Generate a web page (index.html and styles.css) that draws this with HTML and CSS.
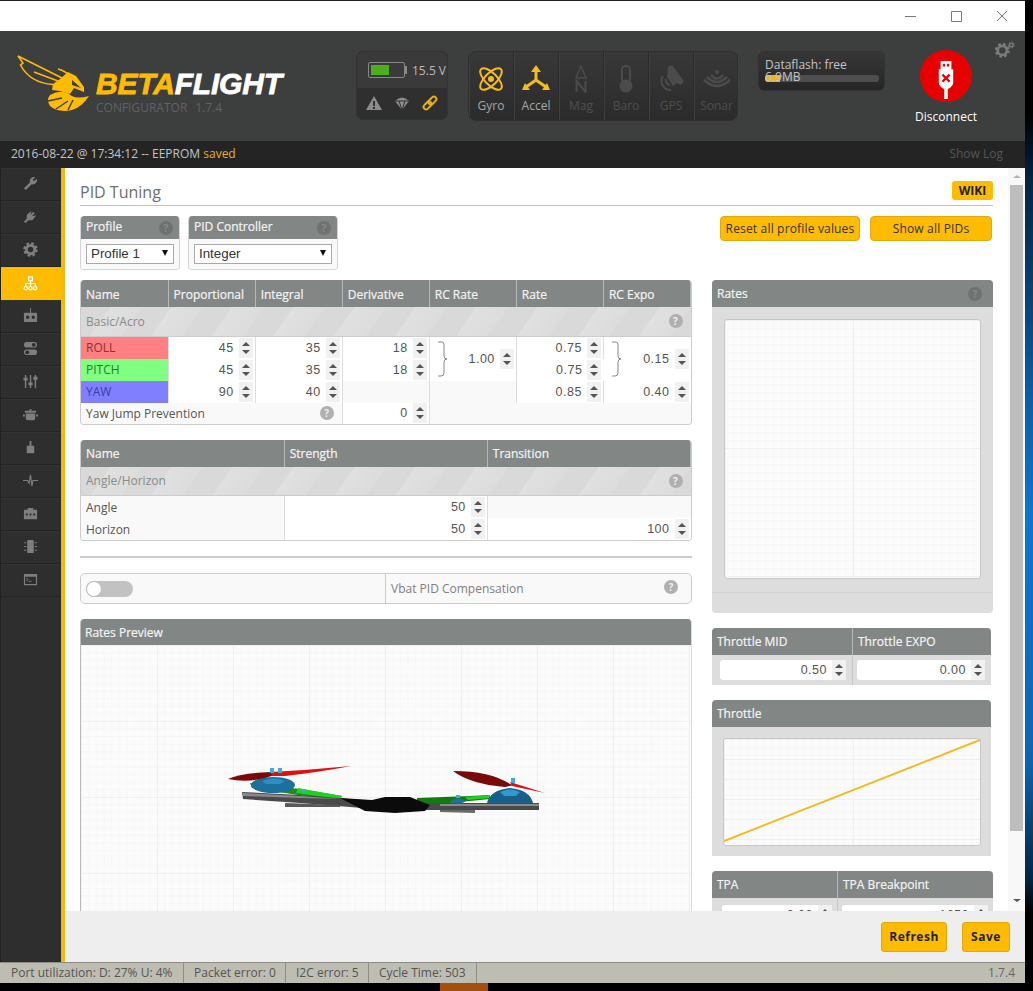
FILE: index.html
```html
<!DOCTYPE html>
<html lang="en">
<head>
    <meta charset="UTF-8">
    <title>Betaflight Configurator</title>
    <link rel="stylesheet" href="styles.css">
</head>
<body>
    <div class="screen">
        <div class="window">
            <div class="titlebar">
                <svg class="win-btn" viewBox="0 0 12 12"><path d="M1 6.500H12"/></svg>
                <svg class="win-btn" viewBox="0 0 12 12"><path d="M1.500 1.500H11.500V11.500H1.500Z"/></svg>
                <svg class="win-btn" viewBox="0 0 12 12"><path d="M1 1L11 11M11 1L1 11"/></svg>
            </div>

            <header class="header">
                <div class="logo">
                    <svg class="bee" viewBox="15 52 75 62">
                        <g fill="none" stroke="#ffbb00" stroke-width="1.6">
                            <path d="M18 56L62 78"/>
                            <path d="M18 56L23 63L20.500 65Q30 83 53 84.500"/>
                            <path d="M34 72L58 81"/>
                            <path d="M58 69Q66 71 72 78"/>
                        </g>
                        <path fill="#ffbb00" d="M60 79L68 72L76 76L84 87L84 92L74 88L70 94L60 91L52 90L53 84Z"/>
                        <path fill="#3d3e3e" d="M72 80L81 88L72 85Z"/>
                        <path fill="#ffbb00" d="M50 95Q62 88 72 96Q78 99 89 96Q82 107 72 110Q58 113 50 106Q46 100 50 95Z"/>
                        <path fill="none" stroke="#3d3e3e" stroke-width="1.5" d="M48 101L62 98M56 109L68 101M68 110L73 100"/>
                    </svg>
                    <div class="logo-text">
                        <div class="wordmark"><span class="wordmark-beta">BETA</span>FLIGHT</div>
                        <div class="logo-sub"><span>CONFIGURATOR</span><span>1.7.4</span></div>
                    </div>
                </div>

                <div class="battery-box">
                    <div class="battery-top">
                        <div class="battery"><div class="battery-fill"></div></div>
                        <span class="battery-volt">15.5 V</span>
                    </div>
                    <div class="battery-bottom">
                        <svg class="status-icon" viewBox="0 0 16 16"><path fill="#8c8c8c" d="M8 1L16 15H0Z"/><path fill="#333" d="M7 6H9V11H7ZM7 12H9V14H7Z"/></svg>
                        <svg class="status-icon" viewBox="0 0 16 16"><path fill="#8c8c8c" d="M1 6Q8 -1 15 6L8 15Z"/><path fill="none" stroke="#333" d="M1 6H15M5 6L8 15L11 6"/></svg>
                        <svg class="status-icon" viewBox="0 0 16 16"><g fill="none" stroke="#e8b010" stroke-width="2" transform="rotate(-45 8 8)"><rect x="0" y="5.500" width="9" height="5" rx="2.500"/><rect x="7" y="5.500" width="9" height="5" rx="2.500"/></g></svg>
                    </div>
                </div>

                <div class="sensors">
                    <div class="sensor on">
                        <svg class="sensor-icon" viewBox="0 0 28 28"><g fill="none" stroke="#f4bc1c" stroke-width="2"><ellipse cx="14" cy="14" rx="6" ry="14" transform="rotate(45 14 14)"/><ellipse cx="14" cy="14" rx="6" ry="14" transform="rotate(-45 14 14)"/></g><circle cx="14" cy="14" r="3" fill="#f4bc1c"/></svg>
                        <span>Gyro</span>
                    </div>
                    <div class="sensor on">
                        <svg class="sensor-icon" viewBox="0 0 28 28"><path fill="none" stroke="#f4bc1c" stroke-width="3" d="M14 6V15M14 15L4 22M14 15L24 22"/><path fill="#f4bc1c" d="M14 0L19 7H9ZM0 25L3 18L8 25ZM28 25L25 18L20 25Z"/></svg>
                        <span>Accel</span>
                    </div>
                    <div class="sensor">
                        <svg class="sensor-icon" viewBox="0 0 28 28"><path fill="none" stroke="#4b4b4b" stroke-width="1.500" d="M14 1L9 13H19Z"/><path fill="none" stroke="#4b4b4b" stroke-width="2" d="M9.500 27V16L18.500 27V16"/></svg>
                        <span>Mag</span>
                    </div>
                    <div class="sensor">
                        <svg class="sensor-icon" viewBox="0 0 28 28"><rect x="10" y="1" width="8" height="18" rx="4" fill="none" stroke="#4b4b4b" stroke-width="2"/><circle cx="14" cy="21" r="6.500" fill="#4b4b4b"/></svg>
                        <span>Baro</span>
                    </div>
                    <div class="sensor">
                        <svg class="sensor-icon" viewBox="0 0 28 28"><path fill="#4b4b4b" d="M11 2L15 0L27 16L24 20L20 18L16 21L10 12Z"/><path fill="none" stroke="#4b4b4b" stroke-width="2" d="M6 11A9 9 0 0 0 14 25M9 14A5 5 0 0 0 13 20"/></svg>
                        <span>GPS</span>
                    </div>
                    <div class="sensor">
                        <svg class="sensor-icon" viewBox="0 0 28 28"><circle cx="14" cy="7" r="2" fill="#4b4b4b"/><path fill="none" stroke="#4b4b4b" stroke-width="2.500" d="M8 10Q14 17 20 10M4 12Q14 22 24 12M1 15Q14 27 27 15"/></svg>
                        <span>Sonar</span>
                    </div>
                </div>

                <div class="dataflash">
                    <div class="dataflash-bar"><div class="dataflash-used"></div></div>
                    <div class="dataflash-text">Dataflash: free 6.9MB</div>
                </div>

                <div class="connect">
                    <div class="connect-circle">
                        <svg class="usb" viewBox="0 0 20 42"><path fill="#fff" d="M4 0H16V9H18V24Q18 28 12 31V42H8V31Q2 28 2 24V9H4Z"/><path fill="#e60000" d="M6.500 3H9V6H6.500ZM11 3H13.500V6H11Z"/><path fill="none" stroke="#e60000" stroke-width="2.500" d="M6 15L14 23M14 15L6 23"/></svg>
                    </div>
                    <div class="connect-label">Disconnect</div>
                </div>

                <svg class="settings" viewBox="0 0 22 18">
                    <circle cx="8" cy="10" r="5" fill="none" stroke="#7a7a7a" stroke-width="3"/>
                    <circle cx="8" cy="10" r="7" fill="none" stroke="#7a7a7a" stroke-width="2.500" stroke-dasharray="3 2.500"/>
                    <circle cx="18" cy="4" r="2" fill="none" stroke="#7a7a7a" stroke-width="1.500"/>
                    <circle cx="18" cy="4" r="3.300" fill="none" stroke="#7a7a7a" stroke-width="1" stroke-dasharray="1.500 1.500"/>
                </svg>
            </header>

            <div class="logbar">
                <div>2016-08-22 @ 17:34:12 -- EEPROM <span class="saved">saved</span></div>
                <div class="show-log">Show Log</div>
            </div>

            <div class="middle">
                <nav class="sidebar">
                    <a class="nav-item"><svg viewBox="0 0 16 16"><path d="M14.800 3L11.500 5.500L10.500 4L13 1.200A4.500 4.500 0 0 0 7.300 6.800L1 13L3 15L9.200 8.700A4.500 4.500 0 0 0 14.800 3Z"/></svg></a>
                    <a class="nav-item"><svg viewBox="0 0 16 16"><path d="M9 2L8 6L11 3L12.500 4.500L9.500 7.500L14 7L10 12H6L2.500 15L1 13.500L4 10V6Z"/></svg></a>
                    <a class="nav-item"><svg viewBox="0 0 16 16"><circle cx="8" cy="8" r="4.500" fill="none" stroke="#7e7e7e" stroke-width="3"/><circle cx="8" cy="8" r="6.500" fill="none" stroke="#7e7e7e" stroke-width="2.500" stroke-dasharray="2.800 2.300"/></svg></a>
                    <a class="nav-item active"><svg viewBox="0 0 16 16"><g fill="none" stroke="#fff" stroke-width="1.300"><rect x="6" y="1" width="4" height="4"/><path d="M8 5V8M3 11V8H13V11M8 8V11"/><circle cx="3" cy="13" r="1.800"/><circle cx="8" cy="13" r="1.800"/><circle cx="13" cy="13" r="1.800"/></g></svg></a>
                    <a class="nav-item"><svg viewBox="0 0 16 16"><path d="M7.500 0H8.500V5H14Q15 5 15 6V14Q15 15 14 15H2Q1 15 1 14V6Q1 5 2 5H7.500ZM5 8A1.800 1.800 0 1 0 5 11.600A1.800 1.800 0 1 0 5 8ZM11 8A1.800 1.800 0 1 0 11 11.600A1.800 1.800 0 1 0 11 8Z"/></svg></a>
                    <a class="nav-item"><svg viewBox="0 0 16 16"><path d="M4 1H12A3 3 0 0 1 12 7H4A3 3 0 0 1 4 1ZM4 9H12A3 3 0 0 1 12 15H4A3 3 0 0 1 4 9Z"/><circle cx="11.500" cy="4" r="2" fill="#2e2e2e"/><circle cx="4.500" cy="12" r="2" fill="#2e2e2e"/></svg></a>
                    <a class="nav-item"><svg viewBox="0 0 16 16"><path d="M2 1H3.500V15H2ZM7.300 1H8.800V15H7.300ZM12.500 1H14V15H12.500Z"/><path d="M0.500 4H5V7H0.500ZM5.800 9H10.300V12H5.800ZM11 3H15.500V6H11Z"/></svg></a>
                    <a class="nav-item"><svg viewBox="0 0 16 16"><path d="M7 2H9V4H14V6H2V4H7ZM3 7H13V12Q13 14 11 14H5Q3 14 3 12ZM0 8H2V10H0ZM14 8H16V10H14Z"/></svg></a>
                    <a class="nav-item"><svg viewBox="0 0 16 16"><path d="M7 1H9V6H12V14H4V6H7Z"/></svg></a>
                    <a class="nav-item"><svg viewBox="0 0 16 16"><path fill="none" stroke="#7e7e7e" stroke-width="1.200" d="M0 8H5L6.500 11L8 2L9.500 14L10.500 8H16"/></svg></a>
                    <a class="nav-item"><svg viewBox="0 0 16 16"><path d="M5 2H11V4H15V14H1V4H5Z"/><path fill="#2e2e2e" d="M3 8H5V10H3ZM7 8H9V10H7ZM11 8H13V10H11Z"/></svg></a>
                    <a class="nav-item"><svg viewBox="0 0 16 16"><rect x="4.500" y="1" width="7" height="14" rx="1"/><path fill="none" stroke="#7e7e7e" stroke-width="1.200" d="M1 4H3.500M1 8H3.500M1 12H3.500M12.500 4H15M12.500 8H15M12.500 12H15"/></svg></a>
                    <a class="nav-item"><svg viewBox="0 0 16 16"><path d="M1 2H15V14H1ZM2.200 5V12.800H13.800V5Z"/><path fill="none" stroke="#7e7e7e" d="M3.500 6.500L5.500 8L3.500 9.500M6 10H9"/></svg></a>
                </nav>

                <main class="main">
                    <div class="scroll-area">
                        <div class="tab">
                            <div class="tab-title">
                                <h1>PID Tuning</h1>
                                <a class="wiki">WIKI</a>
                            </div>

                            <div class="top-row">
                                <div class="pick pick-profile">
                                    <div class="pick-head">Profile <span class="help dark">?</span></div>
                                    <div class="pick-body"><div class="select">Profile 1</div></div>
                                </div>
                                <div class="pick pick-controller">
                                    <div class="pick-head">PID Controller <span class="help dark">?</span></div>
                                    <div class="pick-body"><div class="select">Integer</div></div>
                                </div>
                                <div class="top-actions">
                                    <a class="btn btn-reset">Reset all profile values</a>
                                    <a class="btn btn-show">Show all PIDs</a>
                                </div>
                            </div>

                            <div class="columns">
                                <div class="col-left">
                                    <div class="gui-box">
                                        <table class="pid-table">
                                            <tr class="head">
                                                <th>Name</th><th>Proportional</th><th>Integral</th><th>Derivative</th><th>RC Rate</th><th>Rate</th><th>RC Expo</th>
                                            </tr>
                                            <tr class="section">
                                                <td colspan="7"><div class="section-in">Basic/Acro <span class="help">?</span></div></td>
                                            </tr>
                                            <tr>
                                                <td class="name roll">ROLL</td>
                                                <td><div class="num">45<i class="spin"></i></div></td>
                                                <td><div class="num">35<i class="spin"></i></div></td>
                                                <td><div class="num">18<i class="spin"></i></div></td>
                                                <td rowspan="2" class="plain"><div class="num braced"><svg class="brace" viewBox="0 0 10 36"><path d="M0 1H4Q6 1 6 4V15Q6 18 9 18Q6 18 6 21V32Q6 35 3 35H0"/></svg><b>1.00</b><i class="spin"></i></div></td>
                                                <td><div class="num">0.75<i class="spin"></i></div></td>
                                                <td rowspan="2" class="plain"><div class="num braced"><svg class="brace" viewBox="0 0 10 36"><path d="M0 1H4Q6 1 6 4V15Q6 18 9 18Q6 18 6 21V32Q6 35 3 35H0"/></svg><b>0.15</b><i class="spin"></i></div></td>
                                            </tr>
                                            <tr>
                                                <td class="name pitch">PITCH</td>
                                                <td><div class="num">45<i class="spin"></i></div></td>
                                                <td><div class="num">35<i class="spin"></i></div></td>
                                                <td><div class="num">18<i class="spin"></i></div></td>
                                                <td><div class="num">0.75<i class="spin"></i></div></td>
                                            </tr>
                                            <tr>
                                                <td class="name yaw">YAW</td>
                                                <td><div class="num">90<i class="spin"></i></div></td>
                                                <td><div class="num">40<i class="spin"></i></div></td>
                                                <td class="empty"></td>
                                                <td class="empty"></td>
                                                <td><div class="num">0.85<i class="spin"></i></div></td>
                                                <td><div class="num">0.40<i class="spin"></i></div></td>
                                            </tr>
                                            <tr class="short">
                                                <td colspan="3" class="empty"><div class="row-label">Yaw Jump Prevention <span class="help">?</span></div></td>
                                                <td><div class="num">0<i class="spin"></i></div></td>
                                                <td colspan="3" class="empty"></td>
                                            </tr>
                                        </table>
                                    </div>

                                    <div class="gui-box">
                                        <table class="pid-table">
                                            <tr class="head"><th>Name</th><th>Strength</th><th>Transition</th></tr>
                                            <tr class="section">
                                                <td colspan="3"><div class="section-in">Angle/Horizon <span class="help">?</span></div></td>
                                            </tr>
                                            <tr>
                                                <td class="empty"><div class="row-label">Angle</div></td>
                                                <td><div class="num">50<i class="spin"></i></div></td>
                                                <td class="empty"></td>
                                            </tr>
                                            <tr>
                                                <td class="empty"><div class="row-label">Horizon</div></td>
                                                <td><div class="num">50<i class="spin"></i></div></td>
                                                <td><div class="num">100<i class="spin"></i></div></td>
                                            </tr>
                                        </table>
                                    </div>

                                    <div class="divider"></div>

                                    <div class="vbat">
                                        <div class="vbat-left"><div class="toggle"><div class="knob"></div></div></div>
                                        <div class="vbat-right">Vbat PID Compensation <span class="help">?</span></div>
                                    </div>

                                    <div class="preview">
                                        <div class="panel-head">Rates Preview</div>
                                        <div class="preview-body grid-bg">
                                            <svg class="quad" viewBox="225 760 320 55">
                                                <path fill="#1f8a1f" d="M250 783L300 789L342 796L340 800L298 795L252 788Z"/>
                                                <path fill="#22d022" d="M298 788L342 796L340 799L296 793Z"/>
                                                <path fill="#147a14" d="M417 798L470 796L490 795L490 799L440 804L417 803Z"/>
                                                <path fill="#22d022" d="M465 797L490 795L490 798L468 800Z"/>
                                                <path fill="#4a4a4a" d="M242 792L300 795L375 801L375 809L300 803L243 799Z"/>
                                                <path fill="#8a8a8a" d="M243 793L300 796L340 799L300 798L243 796Z"/>
                                                <path fill="#5a5a5a" d="M285 803L340 805L340 807L285 807Z"/>
                                                <path fill="#4a4a4a" d="M405 803L539 803L539 810L405 810Z"/>
                                                <path fill="#8a8a8a" d="M440 804L539 804L539 806L440 806Z"/>
                                                <path fill="#6a6a6a" d="M440 810L475 810L475 813L440 812Z"/>
                                                <path fill="#0b0b0b" d="M340 798L372 800L385 797L410 797L430 805L425 811L395 813L365 811Z"/>
                                                <ellipse cx="273" cy="785" rx="22" ry="8" fill="#1d6f9e"/>
                                                <path fill="#2a8fc4" d="M262 781Q273 776 285 781L280 784H266Z"/>
                                                <path fill="#1a5f88" d="M487 803Q490 790 510 788Q530 790 533 803Z"/>
                                                <path fill="#2d9ad0" d="M500 792Q510 787 520 792L516 796H504Z"/>
                                                <ellipse cx="458" cy="801" rx="7" ry="2.500" fill="#1d6f9e"/>
                                                <path fill="#7a0a0a" d="M228 779Q240 773 272 772L275 775Q250 784 228 779Z"/>
                                                <path fill="#e01010" d="M270 772Q310 770 351 766Q320 772 285 776L272 776Z"/>
                                                <path fill="#7a0a0a" d="M453 771Q490 771 510 784L514 785L505 787Q470 784 453 771Z"/>
                                                <path fill="#e01010" d="M510 782L545 793L512 786Z"/>
                                                <path fill="#35b0e0" d="M270 768H274V773H270ZM278 768H282V773H278ZM302 789H306V792H302ZM456 795H460V798H456ZM511 778H515V783H511Z"/>
                                            </svg>
                                        </div>
                                    </div>
                                </div>

                                <div class="col-right">
                                    <div class="panel panel-rates">
                                        <div class="panel-head">Rates <span class="help dark">?</span></div>
                                        <div class="rates-body">
                                            <div class="rates-plot grid-bg"></div>
                                        </div>
                                        <div class="rates-foot"></div>
                                    </div>

                                    <div class="panel panel-narrow">
                                        <div class="pair pair-throttle">
                                            <div class="panel-head pair-head">Throttle MID</div>
                                            <div class="panel-head pair-head">Throttle EXPO</div>
                                            <div class="pair-cell"><div class="field">0.50<i class="spin"></i></div></div>
                                            <div class="pair-cell"><div class="field">0.00<i class="spin"></i></div></div>
                                        </div>
                                    </div>

                                    <div class="panel panel-narrow">
                                        <div class="panel-head">Throttle</div>
                                        <div class="throttle-body">
                                            <div class="throttle-plot grid-bg">
                                                <svg class="throttle-line" viewBox="0 0 258 108" preserveAspectRatio="none"><path d="M0 104L258 1"/></svg>
                                            </div>
                                        </div>
                                    </div>

                                    <div class="panel">
                                        <div class="pair pair-tpa">
                                            <div class="panel-head pair-head">TPA</div>
                                            <div class="panel-head pair-head">TPA Breakpoint</div>
                                            <div class="pair-cell"><div class="field">0.00<i class="spin"></i></div></div>
                                            <div class="pair-cell"><div class="field">1650<i class="spin"></i></div></div>
                                        </div>
                                    </div>
                                </div>
                            </div>
                        </div>
                        <div class="scrollbar">
                            <span class="arrow-up"></span>
                            <div class="thumb"></div>
                            <span class="arrow-down"></span>
                        </div>
                    </div>

                    <div class="toolbar">
                        <a class="tool-btn tool-refresh">Refresh</a>
                        <a class="tool-btn tool-save">Save</a>
                    </div>
                </main>
            </div>

            <footer class="status">
                <div class="status-item s1">Port utilization: D: 27% U: 4%</div>
                <div class="status-item s2">Packet error: 0</div>
                <div class="status-item s3">I2C error: 5</div>
                <div class="status-item s4">Cycle Time: 503</div>
                <div class="status-version">1.7.4</div>
            </footer>
        </div>
        <div class="taskbar"><div class="task-active"></div></div>
    </div>
    <div class="desktop"></div>
</body>
</html>
```

FILE: styles.css
```css
* {
    box-sizing: border-box;
}
html, body {
    margin: 0;
    height: 991px;
    overflow: hidden;
}
body {
    display: flex;
    background-color: #000;
    font-family: "Open Sans", "Liberation Sans", sans-serif;
    font-size: 12px;
    color: #444;
}
.screen {
    width: 1025px;
    flex: none;
}
.desktop {
    flex: 1;
    background: linear-gradient(180deg, #000 0, #000 110px, #06233f 180px, #0a5fa8 400px, #0a78d0 520px, #0a66b4 760px, #02243f 880px, #000 912px);
}
.window {
    height: 983px;
    display: flex;
    flex-direction: column;
    background-color: #fff;
    border-top: 1px solid #222;
    overflow: hidden;
}
.taskbar {
    height: 8px;
}
.task-active {
    width: 48px;
    height: 8px;
    margin-left: 440px;
    background-color: #a3500f;
}

/* title bar */
.titlebar {
    height: 30px;
    flex: none;
    display: flex;
    justify-content: flex-end;
    align-items: center;
    gap: 34px;
    padding: 0 17px 1px 0;
}
.win-btn {
    width: 12px;
    height: 12px;
    fill: none;
    stroke: #7a7a7a;
    stroke-width: 1;
}

/* header */
.header {
    height: 110px;
    flex: none;
    display: flex;
    padding-top: 20px;
    position: relative;
    background-color: #3d3e3e;
}
.logo {
    width: 356px;
    flex: none;
    display: flex;
    height: 70px;
}
.bee {
    width: 75px;
    height: 62px;
    margin: 1px 0 0 15px;
    flex: none;
}
.logo-text {
    margin-left: 6px;
    padding-top: 18px;
}
.wordmark {
    font-family: "Liberation Sans", sans-serif;
    font-weight: 700;
    font-style: italic;
    font-size: 30px;
    line-height: 30px;
    color: #fff;
    white-space: nowrap;
    -webkit-text-stroke: 0.8px currentColor;
    letter-spacing: -0.2px;
}
.wordmark-beta {
    color: #ffbb00;
}
.logo-sub {
    display: flex;
    gap: 8px;
    color: #626262;
    font-size: 12px;
    line-height: 17px;
    white-space: nowrap;
}

.battery-box {
    width: 92px;
    height: 69px;
    flex: none;
    margin-right: 20px;
    border-radius: 7px;
    overflow: hidden;
    background-color: #2f2f2f;
    border: 1px solid #333;
}
.battery-top {
    height: 36px;
    display: flex;
    align-items: center;
    padding-left: 11px;
    background-color: #3a3a3a;
}
.battery {
    width: 37px;
    height: 16px;
    padding: 2px;
    border: 1px solid #888;
    border-radius: 2px;
    position: relative;
}
.battery::after {
    content: "";
    position: absolute;
    right: -3px;
    top: 3px;
    width: 2px;
    height: 8px;
    background-color: #888;
}
.battery-fill {
    width: 18px;
    height: 100%;
    background-color: #4caf1e;
}
.battery-volt {
    margin-left: 7px;
    color: #bbb;
    white-space: nowrap;
}
.battery-bottom {
    display: flex;
    padding: 7px 0 0 9px;
    gap: 12px;
}
.status-icon {
    width: 16px;
    height: 16px;
}

.sensors {
    width: 270px;
    height: 70px;
    flex: none;
    margin-right: 20px;
    display: flex;
    border-radius: 8px;
    overflow: hidden;
    background: linear-gradient(180deg, #383838, #2b2b2b);
    border: 1px solid #2f2f2f;
}
.sensor {
    width: 45px;
    flex: none;
    display: flex;
    flex-direction: column;
    align-items: center;
    padding-top: 13px;
    border-right: 1px solid #2a2a2a;
    box-shadow: inset 1px 0 0 #404040;
    color: #4e4e4e;
}
.sensor:last-child {
    border-right: none;
}
.sensor.on {
    color: #a8a8a8;
}
.sensor span {
    margin-top: 4px;
    line-height: 18px;
    white-space: nowrap;
}
.sensor-icon {
    width: 28px;
    height: 28px;
}

.dataflash {
    width: 127px;
    height: 40px;
    flex: none;
    position: relative;
    padding: 7px 6px;
    border-radius: 6px;
    background: linear-gradient(180deg, #363636, #262626);
    border: 1px solid #333;
}
.dataflash-text {
    position: relative;
    width: 100px;
    color: #c4c4c4;
    line-height: 12px;
}
.dataflash-bar {
    position: absolute;
    left: 6px;
    top: 23px;
    width: 114px;
    height: 7px;
    border-radius: 3px;
    background-color: #4e4e4e;
    overflow: hidden;
}
.dataflash-used {
    width: 15px;
    height: 100%;
    background-color: #f0b416;
}

.connect {
    width: 90px;
    flex: none;
    margin-left: 16px;
    margin-top: -1px;
    display: flex;
    flex-direction: column;
    align-items: center;
}
.connect-circle {
    width: 52px;
    height: 52px;
    border-radius: 50%;
    background-color: #e60000;
    display: flex;
    justify-content: center;
    padding-top: 10px;
}
.usb {
    width: 18px;
    height: 40px;
}
.connect-label {
    margin-top: 6px;
    color: #fff;
    font-weight: 500;
    line-height: 17px;
}
.settings {
    position: absolute;
    right: 10px;
    top: 10px;
    width: 20px;
    height: 17px;
}

.logbar {
    height: 27px;
    flex: none;
    display: flex;
    justify-content: space-between;
    align-items: center;
    padding: 0 22px 2px 11px;
    background-color: #242424;
    color: #c4c4c4;
    font-weight: 500;
}
.saved {
    color: #e8b010;
    font-weight: 400;
}
.show-log {
    color: #565656;
    font-weight: 400;
}

/* sidebar */
.middle {
    flex: 1;
    display: flex;
    min-height: 0;
}
.sidebar {
    width: 65px;
    flex: none;
    background-color: #2e2e2e;
    border-right: 4px solid #f2b90f;
    border-left: 1px solid #222;
}
.nav-item {
    height: 33px;
    display: flex;
    align-items: center;
    justify-content: center;
    padding-bottom: 1px;
    border-bottom: 1px solid #242424;
    box-shadow: inset 0 1px 0 #333;
}
.nav-item svg {
    width: 15px;
    height: 15px;
    margin-right: 1px;
    fill: #7e7e7e;
}
.nav-item.active {
    background-color: #ffbb00;
    box-shadow: none;
    border-bottom: none;
}
.nav-item.active svg {
    fill: none;
}

/* main area */
.main {
    flex: 1;
    min-width: 0;
    display: flex;
    flex-direction: column;
}
.scroll-area {
    height: 743px;
    flex: none;
    display: flex;
    overflow: hidden;
}
.tab {
    width: 943px;
    flex: none;
    padding: 0 15px;
}
.tab-title {
    height: 38px;
    display: flex;
    justify-content: space-between;
    align-items: flex-start;
    border-bottom: 1px solid #f2c23a;
}
h1 {
    margin: 13px 0 0;
    font-size: 16px;
    line-height: 22px;
    font-weight: 400;
    color: #707070;
}
.wiki {
    width: 41px;
    height: 19px;
    margin-top: 13px;
    border-radius: 3px;
    background-color: #ffbb00;
    color: #222;
    font-weight: 700;
    font-size: 12px;
    line-height: 19px;
    text-align: center;
}

.top-row {
    display: flex;
    gap: 8px;
    height: 54px;
    margin-top: 10px;
}
.pick {
    border-radius: 4px;
    overflow: hidden;
    border: 1px solid #d4d4d4;
    border-top: none;
}
.pick-profile {
    width: 100px;
}
.pick-controller {
    width: 150px;
}
.pick-head {
    height: 23px;
    display: flex;
    justify-content: space-between;
    align-items: center;
    margin: 0 -1px;
    padding: 0 7px 2px 6px;
    background-color: #828785;
    color: #f4f4f4;
    font-weight: 500;
    -webkit-text-stroke: 0.2px currentColor;
}
.pick-head .help {
    margin-top: 2px;
}
.pick-body {
    height: 30px;
    padding: 5px;
    background-color: #f9f9f9;
}
.select {
    height: 20px;
    padding-left: 4px;
    background-color: #fff;
    border: 1px solid #a9a9a9;
    color: #333;
    font-family: "Liberation Sans", sans-serif;
    font-size: 13.33px;
    line-height: 18px;
    position: relative;
}
.select::after {
    content: "";
    position: absolute;
    right: 5px;
    top: 5px;
    border-left: 3.5px solid transparent;
    border-right: 3.5px solid transparent;
    border-top: 6px solid #111;
}
.top-actions {
    margin-left: auto;
    margin-right: 1px;
    display: flex;
    gap: 10px;
    height: 25px;
}
.btn {
    height: 25px;
    border-radius: 4px;
    background-color: #ffbb00;
    border: 1px solid #e0a810;
    color: #333;
    line-height: 23px;
    letter-spacing: 0.17px;
    text-align: center;
    white-space: nowrap;
}
.btn-reset {
    width: 140px;
}
.btn-show {
    width: 122px;
}

.columns {
    display: flex;
    gap: 20px;
    margin-top: 10px;
}
.col-left {
    width: 612px;
    flex: none;
}
.col-right {
    width: 281px;
    flex: none;
}

/* tables */
.gui-box {
    margin-bottom: 15px;
    border: 1px solid #ccc;
    border-top: none;
    border-radius: 4px;
    overflow: hidden;
}
.pid-table {
    width: 100%;
    table-layout: fixed;
    border-collapse: collapse;
}
.pid-table td, .pid-table th {
    padding: 0;
    height: 22px;
    border-right: 1px solid #ddd;
}
.pid-table td:last-child, .pid-table th:last-child {
    border-right: none;
}
.pid-table .head th {
    height: 27px;
    padding: 1px 0 0 5px;
    background-color: #828785;
    border-right: 1px solid #b4b8b6;
    color: #f4f4f4;
    font-weight: 500;
    -webkit-text-stroke: 0.2px currentColor;
    text-align: left;
    white-space: nowrap;
    overflow: hidden;
}
.pid-table .section td {
    height: 29px;
    border-right: none;
    border-bottom: 1px solid #ccc;
    background: repeating-linear-gradient(125deg, #d9d9d9 0, #d9d9d9 24px, #e0e0e0 24px, #dcdcdc 50px);
}
.pid-table .short td {
    height: 21px;
}
.short .num {
    height: 21px;
}
.section-in {
    display: flex;
    justify-content: space-between;
    align-items: center;
    padding: 0 8px 0 5px;
    color: #8a8a8a;
}
.name {
    padding-left: 5px !important;
}
.roll {
    background-color: #ff8080;
    color: #8a3232;
}
.pitch {
    background-color: #80ff80;
    color: #2d7a2d;
}
.yaw {
    background-color: #8080ff;
    color: #3c3ca8;
}
.empty {
    background-color: #f9f9f9;
}
.plain {
    background-color: #fff;
}
.row-label {
    display: flex;
    justify-content: space-between;
    align-items: center;
    padding: 0 8px 0 5px;
    color: #555;
}
.num {
    display: flex;
    align-items: center;
    justify-content: flex-end;
    height: 22px;
    padding-right: 2px;
    background-color: #fff;
    font-family: "Liberation Sans", sans-serif;
    font-size: 12.5px;
    letter-spacing: 0.5px;
    color: #555;
}
.num b {
    font-weight: 400;
}
.braced {
    height: 44px;
    position: relative;
}
.brace {
    position: absolute;
    left: 8px;
    top: 4px;
    width: 10px;
    height: 36px;
    fill: none;
    stroke: #888;
    stroke-width: 1;
}
.spin {
    width: 14px;
    height: 20px;
    margin-left: 5px;
    flex: none;
    position: relative;
    background-color: #f1f1f1;
}
.spin::before, .spin::after {
    content: "";
    position: absolute;
    left: 3px;
    border-left: 4px solid transparent;
    border-right: 4px solid transparent;
}
.spin::before {
    top: 4px;
    border-bottom: 4px solid #555;
}
.spin::after {
    bottom: 4px;
    border-top: 4px solid #555;
}
.help {
    display: inline-block;
    width: 14px;
    height: 14px;
    flex: none;
    border-radius: 50%;
    background-color: #b0b0b0;
    color: #eee;
    font-size: 10px;
    font-weight: 700;
    font-style: normal;
    line-height: 14px;
    text-align: center;
    -webkit-text-stroke: 0;
}
.help.dark {
    background-color: #6e7270;
    color: #858a88;
}

.divider {
    height: 2px;
    margin-bottom: 15px;
    background-color: #ccc;
}
.vbat {
    height: 31px;
    display: flex;
    margin-bottom: 15px;
    border: 1px solid #ccc;
    border-radius: 5px;
    background-color: #f9f9f9;
}
.vbat-left {
    width: 305px;
    flex: none;
    padding: 7px 0 0 5px;
    border-right: 1px solid #ccc;
}
.toggle {
    width: 47px;
    height: 16px;
    border-radius: 8px;
    background-color: #c2c2c2;
}
.knob {
    width: 16px;
    height: 16px;
    border-radius: 50%;
    background-color: #fff;
    border: 1px solid #bbb;
}
.vbat-right {
    flex: 1;
    display: flex;
    justify-content: space-between;
    padding: 5px 13px 0 5px;
    color: #808080;
    line-height: 20px;
}
.vbat-right .help {
    margin-top: 1px;
}

/* panels */
.panel-head {
    height: 27px;
    display: flex;
    justify-content: space-between;
    align-items: center;
    padding: 0 11px 0 5px;
    background-color: #828785;
    color: #f4f4f4;
    font-weight: 500;
    -webkit-text-stroke: 0.2px currentColor;
}
.preview {
    border-radius: 4px;
    overflow: hidden;
    border-left: 1px solid #bbb;
    border-right: 1px solid #ddd;
}
.preview .panel-head {
    margin: 0 -1px;
    height: 26px;
}
.preview-body {
    height: 320px;
    display: flex;
    justify-content: center;
    padding-top: 115px;
}
.quad {
    width: 320px;
    height: 55px;
    margin-right: 2px;
    filter: blur(0.5px);
}
.grid-bg {
    background-color: #fbfbfb;
    background-image:
        linear-gradient(#f0f0f0 1px, transparent 1px),
        linear-gradient(90deg, #f0f0f0 1px, transparent 1px),
        linear-gradient(#f7f7f7 1px, transparent 1px),
        linear-gradient(90deg, #f7f7f7 1px, transparent 1px);
    background-size: 76px 76px, 76px 76px, 7.6px 7.6px, 7.6px 7.6px;
}
.panel {
    margin-bottom: 15px;
    border-radius: 4px 4px 0 0;
    overflow: hidden;
}
.panel-narrow {
    width: 279px;
}
.panel-rates {
    background-color: #ddd;
    border-radius: 4px;
}
.rates-body {
    height: 285px;
    padding: 12px 12px 13px;
}
.rates-plot {
    height: 260px;
    border: 1px solid #c8c8c8;
    border-radius: 3px;
    background-size: 128px 128px, 128px 128px, 8px 8px, 8px 8px;
}
.rates-foot {
    height: 21px;
    border-top: 1px solid #d2d2d2;
}
.pair {
    display: grid;
    background-color: #ddd;
}
.pair-throttle {
    grid-template-columns: 140px 139px;
    grid-template-rows: 27px 30px;
}
.pair-tpa {
    grid-template-columns: 125px 156px;
    grid-template-rows: 27px 40px;
}
.pair-head:nth-child(2) {
    border-left: 1px solid #b4b8b6;
}
.pair-cell {
    padding: 5px 6px 5px 8px;
}
.pair-cell:last-child {
    border-left: 1px solid #c8c8c8;
    padding-left: 4px;
}
.pair-tpa .pair-cell {
    padding: 7px 5px 0 10px;
}
.pair-tpa .pair-cell:last-child {
    padding-left: 4px;
}
.field {
    height: 20px;
    display: flex;
    align-items: center;
    justify-content: flex-end;
    background-color: #fff;
    border-radius: 3px;
    font-family: "Liberation Sans", sans-serif;
    font-size: 12.5px;
    letter-spacing: 0.5px;
    color: #555;
}
.throttle-body {
    height: 129px;
    padding: 11px 10px 10px 11px;
    background-color: #ddd;
}
.throttle-plot {
    height: 108px;
    border: 1px solid #c8c8c8;
    border-radius: 3px;
    background-size: 129px 20px, 129px 20px, 8px 8px, 8px 8px;
}
.throttle-line {
    display: block;
    width: 100%;
    height: 100%;
    fill: none;
    stroke: #f5b921;
    stroke-width: 2;
}

/* scrollbar */
.scrollbar {
    width: 17px;
    flex: none;
    background-color: #f8f8f8;
    display: flex;
    flex-direction: column;
    align-items: center;
}
.thumb {
    width: 13px;
    height: 646px;
    margin-top: 7px;
    background-color: #bdbdbd;
}
.arrow-up, .arrow-down {
    border-left: 4px solid transparent;
    border-right: 4px solid transparent;
}
.arrow-up {
    margin-top: 7px;
    border-bottom: 3px solid #b0b0b0;
}
.arrow-down {
    margin-top: 68px;
    border-top: 3px solid #555;
}

/* bottom */
.toolbar {
    height: 51px;
    flex: none;
    display: flex;
    justify-content: flex-end;
    gap: 15px;
    padding: 11px 15px 0 0;
    background-color: #eee;
}
.tool-btn {
    height: 30px;
    border-radius: 3px;
    background-color: #ffbb00;
    border: 1px solid #e0a810;
    color: #222;
    font-weight: 700;
    font-size: 12px;
    letter-spacing: 0.5px;
    line-height: 28px;
    text-align: center;
}
.tool-refresh {
    width: 66px;
}
.tool-save {
    width: 48px;
}
.status {
    height: 21px;
    flex: none;
    display: flex;
    align-items: stretch;
    background-color: #bdbdb2;
    border-top: 1px solid #8d8d85;
    color: #555;
    line-height: 20px;
}
.status-item {
    padding-left: 10px;
    border-right: 1px solid #8d8d85;
    white-space: nowrap;
}
.s1 {
    width: 184px;
    padding-left: 11px;
}
.s2 {
    width: 102px;
}
.s3 {
    width: 83px;
}
.s4 {
    width: 108px;
}
.status-version {
    margin-left: auto;
    padding-right: 10px;
    color: #666;
}
```
